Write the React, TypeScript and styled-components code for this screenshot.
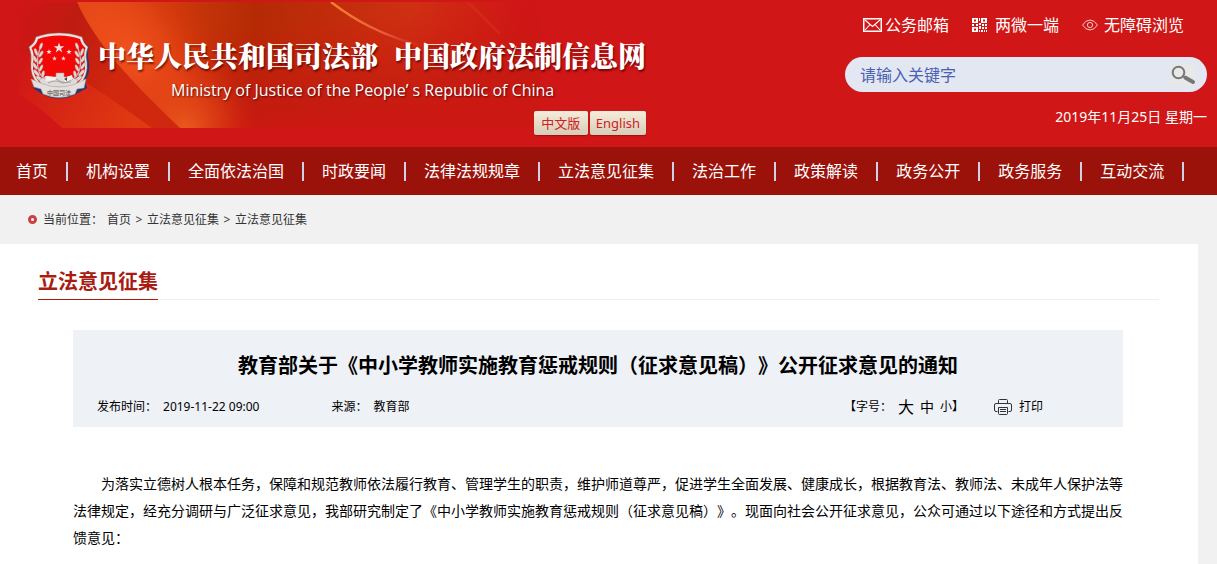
import React from "react";
import styled, { createGlobalStyle } from "styled-components";

const sans = `"Noto Sans", "Noto Sans CJK SC", sans-serif`;

const GlobalStyle = createGlobalStyle`
  *, *::before, *::after { box-sizing: border-box; }
  body {
    margin: 0;
    background: #f1f1f1;
    color: #000;
    font-family: ${sans};
    font-size: 12px;
    text-spacing-trim: space-all;
  }
  a { color: inherit; text-decoration: none; }
  svg { display: block; flex: none; }
`;

const Page = styled.div`
  display: flex;
  flex-direction: column;
  min-height: 100vh;
`;

const Header = styled.header`
  position: relative;
  display: flex;
  justify-content: space-between;
  background: #d01616;
  color: #fff;
`;

const BannerArt = styled.svg`
  position: absolute;
  left: 0;
  top: 2px;
`;

const Brand = styled.div`
  position: relative;
  display: flex;
  gap: 8px;
  padding: 32px 0 12px 28px;
`;

const BrandText = styled.div`
  display: flex;
  flex-direction: column;
`;

const SiteName = styled.h1`
  display: flex;
  gap: 16px;
  margin: 0;
  font-family: "Noto Serif CJK SC", "Noto Sans CJK SC", serif;
  font-size: 28px;
  font-weight: 900;
  line-height: 46px;
  white-space: nowrap;
  text-shadow: 1px 2px 2px rgba(70, 0, 0, 0.7);
`;

const Tagline = styled.p`
  margin: 0 0 9px 73px;
  font-family: "Open Sans", sans-serif;
  font-size: 16px;
  line-height: 24px;
  white-space: nowrap;
  text-shadow: 1px 1px 2px rgba(70, 0, 0, 0.8);
`;

const LangRow = styled.div`
  display: flex;
  justify-content: flex-end;
  gap: 2px;
`;

const LangButton = styled.button`
  min-width: 54px;
  height: 24px;
  padding: 0 6px;
  border: 0;
  border-radius: 2px;
  background: linear-gradient(#f6ecdc, #d6ccb8);
  color: #d0201c;
  font-family: ${sans};
  font-size: 13px;
  line-height: 24px;
  box-shadow: 0 1px 1px rgba(90, 0, 0, 0.4);
`;

const Tools = styled.div`
  position: relative;
  display: flex;
  flex-direction: column;
  width: 362px;
  margin-right: 10px;
  padding-top: 13px;
`;

const QuickLinks = styled.div`
  display: flex;
  justify-content: flex-end;
  gap: 23px;
  margin-right: 23px;
`;

const QuickLink = styled.a<{ $gap: number }>`
  display: flex;
  align-items: center;
  gap: ${(p) => p.$gap}px;
  font-size: 16px;
  line-height: 24px;
  white-space: nowrap;
`;

const SearchBar = styled.form`
  display: flex;
  align-items: center;
  height: 35px;
  margin: 20px 0 14px;
  padding: 0 11px 0 15px;
  border-radius: 18px;
  background: #e2e7f2;
`;

const SearchInput = styled.input`
  flex: 1;
  min-width: 0;
  padding: 0;
  border: 0;
  outline: 0;
  background: transparent;
  font-family: ${sans};
  font-size: 16px;
  line-height: 24px;
  &::placeholder { color: #4a61b4; opacity: 1; }
`;

const SearchButton = styled.button`
  padding: 0;
  border: 0;
  background: #e8e8e8;
`;

const Today = styled.div`
  font-size: 14px;
  line-height: 22px;
  text-align: right;
`;

const Nav = styled.nav`
  display: flex;
  align-items: center;
  height: 48px;
  padding-left: 16px;
  background: #9b120a;
  color: #fff;
`;

const NavLink = styled.a`
  display: flex;
  align-items: center;
  margin-right: 18px;
  font-size: 16px;
  line-height: 24px;
  white-space: nowrap;
  &::after {
    content: "";
    width: 2px;
    height: 19px;
    margin-left: 18px;
    background: #ccd3e8;
  }
`;

const Crumbs = styled.nav`
  display: flex;
  align-items: center;
  gap: 4px;
  height: 49px;
  padding-left: 28px;
  color: #333;
  font-size: 12px;
  line-height: 20px;
`;

const CrumbDot = styled.span`
  width: 9px;
  height: 9px;
  margin-right: 2px;
  border: 3px solid #cc4045;
  border-radius: 50%;
  background: #fff;
`;

const CrumbArrow = styled.span`
  width: 8px;
  text-align: center;
`;

const Main = styled.main`
  flex: 1;
  margin-right: 19px;
  padding: 19px 39px 12px 38px;
  background: #fff;
`;

const SectionHead = styled.div`
  display: flex;
  border-bottom: 1px solid #f1f1f1;
`;

const SectionTitle = styled.h2`
  margin: 0 0 -1px;
  padding-top: 2px;
  border-bottom: 1px solid #a81c12;
  color: #a81c12;
  font-size: 20px;
  font-weight: 700;
  line-height: 34px;
`;

const Article = styled.article`
  margin: 30px 36px 0 35px;
`;

const ArticleHead = styled.header`
  padding: 21px 0 7px;
  background: #eef1f6;
`;

const ArticleTitle = styled.h3`
  margin: 0 0 13px;
  font-size: 20px;
  font-weight: 700;
  line-height: 30px;
  text-align: center;
`;

const Meta = styled.div`
  display: flex;
  align-items: center;
  padding: 0 80px 0 24px;
  font-size: 12px;
  line-height: 26px;
  white-space: nowrap;
`;

const MetaItem = styled.span`
  display: flex;
  gap: 6px;
  margin-right: 72px;
`;

const SizePicker = styled.span`
  display: flex;
  align-items: center;
  margin: 0 30px 0 auto;
`;

const SizeButton = styled.button<{ $size: number }>`
  margin-left: 6px;
  padding: 0;
  border: 0;
  background: none;
  color: #000;
  font-family: ${sans};
  font-size: ${(p) => p.$size}px;
  line-height: 26px;
`;

const PrintButton = styled.button`
  display: flex;
  align-items: center;
  gap: 7px;
  padding: 0;
  border: 0;
  background: none;
  color: #000;
  font-family: ${sans};
  font-size: 12px;
  line-height: 26px;
`;

const Paragraph = styled.p`
  margin: 43px 0 0;
  font-family: "Noto Sans CJK SC", sans-serif;
  font-size: 14px;
  line-height: 27px;
  text-indent: 2em;
`;

const Banner = () => (
  <BannerArt width="540" height="126" viewBox="0 0 540 126" aria-hidden="true">
    <defs>
      <linearGradient id="ribbon" x1="80" y1="0" x2="520" y2="0" gradientUnits="userSpaceOnUse">
        <stop offset="0" stopColor="#e34a1b" />
        <stop offset="0.2" stopColor="#cf3a0c" />
        <stop offset="0.4" stopColor="#b42a04" />
        <stop offset="0.55" stopColor="#c02c0a" />
        <stop offset="0.75" stopColor="#cf3012" />
        <stop offset="1" stopColor="#d01616" />
      </linearGradient>
      <linearGradient id="lower" x1="280" y1="20" x2="290" y2="126" gradientUnits="userSpaceOnUse">
        <stop offset="0" stopColor="#cb1a10" stopOpacity="0" />
        <stop offset="0.7" stopColor="#c41a10" stopOpacity="0.8" />
        <stop offset="1" stopColor="#cc1812" />
      </linearGradient>
      <linearGradient id="shade" x1="20" y1="0" x2="130" y2="40" gradientUnits="userSpaceOnUse">
        <stop offset="0" stopColor="#d01616" />
        <stop offset="0.5" stopColor="#bf1b10" />
        <stop offset="1" stopColor="#cf280e" />
      </linearGradient>
      <radialGradient id="glow" cx="0" cy="0" r="1" gradientTransform="translate(128 50) rotate(51) scale(150 82)" gradientUnits="userSpaceOnUse">
        <stop offset="0" stopColor="#f0521e" />
        <stop offset="0.45" stopColor="#e84716" stopOpacity="0.8" />
        <stop offset="1" stopColor="#d03008" stopOpacity="0" />
      </radialGradient>
      <radialGradient id="ember" cx="185" cy="126" r="70" gradientUnits="userSpaceOnUse">
        <stop offset="0" stopColor="#e95a1d" />
        <stop offset="1" stopColor="#dd3710" stopOpacity="0" />
      </radialGradient>
      <linearGradient id="base" x1="20" y1="60" x2="130" y2="126" gradientUnits="userSpaceOnUse">
        <stop offset="0" stopColor="#d01616" />
        <stop offset="1" stopColor="#df3a12" />
      </linearGradient>
      <linearGradient id="streak" x1="325" y1="0" x2="430" y2="45" gradientUnits="userSpaceOnUse">
        <stop offset="0" stopColor="#f5882a" />
        <stop offset="0.6" stopColor="#ea5a40" />
        <stop offset="1" stopColor="#d22a1a" stopOpacity="0" />
      </linearGradient>
    </defs>
    <rect x="20" width="520" height="126" fill="url(#ribbon)" />
    <rect x="20" width="520" height="126" fill="url(#lower)" />
    <rect x="20" width="300" height="126" fill="url(#glow)" />
    <rect x="110" y="50" width="150" height="76" fill="url(#ember)" />
    <path d="M20 0H77C97 45 140 88 180 126H20Z" fill="url(#shade)" />
    <path d="M20 50C55 58 95 85 152 126H20Z" fill="url(#base)" />
    <path d="M20 94C35 101 50 115 62 126H20Z" fill="#d01616" />
    <path d="M331 0C352 16 380 34 430 46" fill="none" stroke="url(#streak)" strokeWidth="2.4" />
    <path d="M467 0C477 8 488 20 500 32" fill="none" stroke="#d93018" strokeWidth="3" opacity="0.5" />
  </BannerArt>
);

const Laurel = () => (
  <g fill="#dcd8d5" stroke="#9a8f8c" strokeWidth="0.3">
    <path d="M13 14Q8 26 10 36T20 48" fill="none" stroke="#cfc9c6" strokeWidth="1.2" />
    <ellipse cx="13" cy="14" rx="1.4" ry="3.4" transform="rotate(20 13 14)" />
    <ellipse cx="8" cy="20" rx="1.4" ry="3.8" transform="rotate(-20 8 20)" />
    <ellipse cx="13" cy="22" rx="1.4" ry="3.6" transform="rotate(32 13 22)" />
    <ellipse cx="7" cy="27" rx="1.5" ry="3.8" transform="rotate(-28 7 27)" />
    <ellipse cx="12.5" cy="29" rx="1.4" ry="3.6" transform="rotate(30 12.5 29)" />
    <ellipse cx="7" cy="34" rx="1.5" ry="3.9" transform="rotate(-34 7 34)" />
    <ellipse cx="13" cy="36" rx="1.4" ry="3.6" transform="rotate(24 13 36)" />
    <ellipse cx="8.5" cy="41" rx="1.6" ry="4.2" transform="rotate(-42 8.5 41)" />
    <ellipse cx="15" cy="42" rx="1.5" ry="3.4" transform="rotate(12 15 42)" />
    <ellipse cx="12" cy="47" rx="1.8" ry="4.6" transform="rotate(-54 12 47)" />
  </g>
);

const Star = ({ x, y, r }: { x: number; y: number; r: number }) => (
  <path
    transform={`translate(${x} ${y}) scale(${r})`}
    d="M0-1 .23-.31.95-.31.37.12.59.81 0 .38-.59.81-.37.12-.95-.31-.23-.31Z"
    fill="#f7dfda"
  />
);

const Emblem = () => (
  <svg width="62" height="68" viewBox="0 0 62 68" role="img" aria-label="中国司法">
    <path d="M54 8 61 15Q59 22 61 31 62 42 57 48L59 56 48 62Q31 71 14 62L5 56Z" fill="#27366f" />
    <path d="M31 1Q43 1 54 5 55 11 60 15 57 22 59 31 60 44 52 52L31 61 10 52Q2 44 3 31 4 22 1 15 7 11 8 5 19 1 31 1Z" fill="#ebe6e3" stroke="#9b8583" strokeWidth="0.5" />
    <path d="M31 3.5Q43 3.500 52 7 53 12 57.500 16 55 22 57 31 58 43 50 51L31 58 12 51Q4 43 5 31 7 22 3.500 16 9 12 10 7 19 3.500 31 3.500Z" fill="#f30808" />
    <Star x={31} y={16} r={5.500} />
    <Star x={21} y={20} r={2.900} />
    <Star x={41} y={20} r={2.900} />
    <Star x={26.500} y={26.500} r={2.600} />
    <Star x={35.500} y={26.500} r={2.600} />
    <Laurel />
    <g transform="translate(62 0) scale(-1 1)"><Laurel /></g>
    <path d="M28 41H36V45L43 45 50 48 47 55H15L11 48 19 44 28 46Z" fill="#dedbd9" stroke="#a19a97" strokeWidth="0.5" />
    <path d="M16 47Q24 43 30 48T45 47M20 51Q28 47 34 51L43 50" fill="none" stroke="#9a9390" strokeWidth="0.8" />
    <path d="M17 44 29 45 27 48 18 49ZM35 46 44 43 45 47 37 50Z" fill="#f4f2f0" />
    <path d="M36 47 39 45V49Z" fill="#4a4644" />
    <path d="M3 47 15 52Q31 58 47 52L58 47 56 56 49 57 47 62Q31 69 15 62L13 57 6 55Z" fill="#e2dfdd" stroke="#a39d9b" strokeWidth="0.5" />
    <text x="31" y="63" textAnchor="middle" fontSize="6" fontWeight="700" fill="#77716f" fontFamily="Noto Sans CJK SC, sans-serif">中国司法</text>
  </svg>
);

const MailIcon = () => (
  <svg width="19" height="14" viewBox="0 0 19 14" fill="none" stroke="#fff">
    <rect x="0.75" y="0.75" width="17.5" height="12.500" strokeWidth="1.5" />
    <path d="M2 2 9.500 8.500 17 2M2 12 7 6.500M17 12 12 6.500" strokeWidth="1.100" />
  </svg>
);

const QrIcon = () => (
  <svg width="15" height="14" viewBox="0 0 15 14" fill="#fff">
    <path fillRule="evenodd" d="M0 0H6V5H0ZM2 1.500V3.500H4V1.500ZM9 0H15V5H9ZM11 1.500V3.500H13V1.500ZM0 9H6V14H0ZM2 10.500V12.500H4V10.500Z" />
    <path d="M7 0H8V3H7ZM7 5H9V7H7ZM0 6H2V8H0ZM4 6H6V8H4ZM10 6H12V8H10ZM13 6H15V8H13ZM7 8H9V11H7ZM7 12H8V14H7ZM10 9H12V11H10ZM9 12H11V14H9ZM13 9H15V11H13ZM12 12H13V14H12ZM14 12H15V14H14Z" />
  </svg>
);

const EyeIcon = () => (
  <svg width="16" height="12" viewBox="0 0 16 12" fill="none" stroke="#f6c9c9" strokeWidth="1">
    <path d="M.6 6Q3.600 1 8 1T15.400 6Q12.400 11 8 11T.6 6Z" />
    <circle cx="8" cy="6" r="2.600" />
  </svg>
);

const SearchIcon = () => (
  <svg width="26" height="20" viewBox="0 0 26 20" fill="none" stroke="#777">
    <circle cx="8.500" cy="7.500" r="5.800" strokeWidth="2" />
    <path d="M12.500 11 16 13" strokeWidth="2" />
    <path d="M15.500 12.800 23 17" strokeWidth="4" strokeLinecap="round" />
  </svg>
);

const PrinterIcon = () => (
  <svg width="18" height="16" viewBox="0 0 18 16" fill="none" stroke="#333" strokeWidth="1">
    <path d="M4.500 4.500V1.500Q4.500.5 5.500.5H12.500Q13.500.5 13.500 1.500V4.500" />
    <path d="M3.500 12.500H2Q.5 12.500.5 11V6Q.5 4.500 2 4.500H16Q17.500 4.500 17.500 6V11Q17.500 12.500 16 12.500H14.500" />
    <path d="M4.500 8.500H13.500V14.500Q13.500 15.500 12.500 15.500H5.500Q4.500 15.500 4.500 14.500ZM6 10.500H12M6 12.500H12" />
  </svg>
);

const navItems = [
  "首页", "机构设置", "全面依法治国", "时政要闻", "法律法规规章", "立法意见征集",
  "法治工作", "政策解读", "政务公开", "政务服务", "互动交流",
];

export default function App() {
  return (
    <Page>
      <GlobalStyle />
      <Header>
        <Banner />
        <Brand>
          <Emblem />
          <BrandText>
            <SiteName>
              <span>中华人民共和国司法部</span>
              <span>中国政府法制信息网</span>
            </SiteName>
            <Tagline>Ministry of Justice of the People’ s Republic of China</Tagline>
            <LangRow>
              <LangButton type="button">中文版</LangButton>
              <LangButton type="button">English</LangButton>
            </LangRow>
          </BrandText>
        </Brand>
        <Tools>
          <QuickLinks>
            <QuickLink href="#mail" $gap={3}><MailIcon />公务邮箱</QuickLink>
            <QuickLink href="#media" $gap={8}><QrIcon />两微一端</QuickLink>
            <QuickLink href="#access" $gap={6}><EyeIcon />无障碍浏览</QuickLink>
          </QuickLinks>
          <SearchBar role="search">
            <SearchInput type="text" placeholder="请输入关键字" aria-label="请输入关键字" />
            <SearchButton type="submit" aria-label="搜索"><SearchIcon /></SearchButton>
          </SearchBar>
          <Today>2019年11月25日 星期一</Today>
        </Tools>
      </Header>
      <Nav>
        {navItems.map((item) => (
          <NavLink key={item} href="#nav">{item}</NavLink>
        ))}
      </Nav>
      <Crumbs>
        <CrumbDot />
        <span>当前位置：</span>
        <a href="#home">首页</a>
        <CrumbArrow>&gt;</CrumbArrow>
        <a href="#list">立法意见征集</a>
        <CrumbArrow>&gt;</CrumbArrow>
        <a href="#list">立法意见征集</a>
      </Crumbs>
      <Main>
        <SectionHead>
          <SectionTitle>立法意见征集</SectionTitle>
        </SectionHead>
        <Article>
          <ArticleHead>
            <ArticleTitle>教育部关于《中小学教师实施教育惩戒规则（征求意见稿）》公开征求意见的通知</ArticleTitle>
            <Meta>
              <MetaItem><span>发布时间：</span><span>2019-11-22 09:00</span></MetaItem>
              <MetaItem><span>来源：</span><span>教育部</span></MetaItem>
              <SizePicker>
                <span>【字号：</span>
                <SizeButton type="button" $size={16}>大</SizeButton>
                <SizeButton type="button" $size={14}>中</SizeButton>
                <SizeButton type="button" $size={12}>小</SizeButton>
                <span>】</span>
              </SizePicker>
              <PrintButton type="button"><PrinterIcon />打印</PrintButton>
            </Meta>
          </ArticleHead>
          <Paragraph>
            为落实立德树人根本任务，保障和规范教师依法履行教育、管理学生的职责，维护师道尊严，促进学生全面发展、健康成长，根据教育法、教师法、未成年人保护法等法律规定，经充分调研与广泛征求意见，我部研究制定了《中小学教师实施教育惩戒规则（征求意见稿）》。现面向社会公开征求意见，公众可通过以下途径和方式提出反馈意见：
          </Paragraph>
        </Article>
      </Main>
    </Page>
  );
}
